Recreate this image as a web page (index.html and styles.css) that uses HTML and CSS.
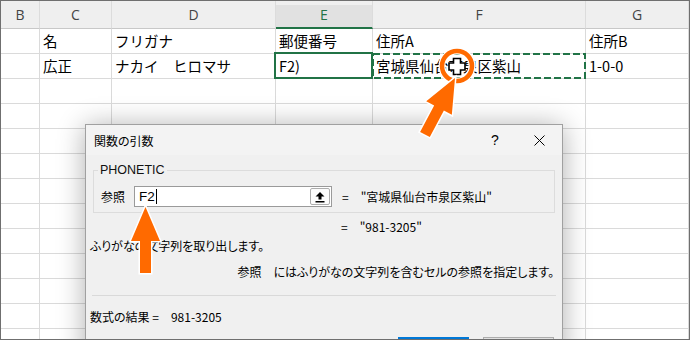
FILE: index.html
```html
<!DOCTYPE html>
<html lang="ja">
  <head>
    <meta charset="UTF-8" />
    <title>関数の引数</title>
    <link rel="stylesheet" href="styles.css">
  </head>
  <body>
    <div class="frame">
      <div class="sheet">
        <!-- 列見出し -->
        <div class="hdr">B</div>
        <div class="hdr">C</div>
        <div class="hdr">D</div>
        <div class="hdr sel">E</div>
        <div class="hdr">F</div>
        <div class="hdr">G</div>

        <!-- 1行目 -->
        <div class="cell"></div>
        <div class="cell">名</div>
        <div class="cell">フリガナ</div>
        <div class="cell">郵便番号</div>
        <div class="cell">住所A</div>
        <div class="cell">住所B</div>

        <!-- 2行目 -->
        <div class="cell"></div>
        <div class="cell">広正</div>
        <div class="cell">ナカイ　ヒロマサ</div>
        <div class="cell active">F2)</div>
        <div class="cell copied">宮城県仙台市泉区紫山
          <svg class="ants" width="215" height="27" viewBox="0 0 215 27">
            <rect x="1" y="1" width="212" height="24" fill="none" stroke="#217346" stroke-width="2" stroke-dasharray="7 3" />
          </svg>
        </div>
        <div class="cell">1-0-0</div>

        <!-- 空の行 -->
        <div class="rest">
          <div class="col"></div>
          <div class="col"></div>
          <div class="col"></div>
          <div class="col"></div>
          <div class="col"></div>
          <div class="col"></div>
        </div>
      </div>

      <!-- 関数の引数ダイアログ -->
      <div class="dialog">
        <div class="dlg-title">
          <span>関数の引数</span>
          <div class="dlg-ctl">
            <span class="ctl">?</span>
            <span class="ctl close">
              <svg width="11" height="11" viewBox="0 0 11 11"><path d="M0.5 0.5 L10.5 10.5 M10.5 0.5 L0.5 10.5" stroke="#000" stroke-width="1" /></svg>
            </span>
          </div>
        </div>

        <fieldset class="group">
          <legend>PHONETIC</legend>
          <div class="arg-row">
            <span class="arg-label">参照</span>
            <div class="arg-input">
              <span class="arg-text">F2</span><span class="caret"></span>
              <span class="ref-btn">
                <svg width="10" height="12" viewBox="0 0 10 12">
                  <path d="M5 1 L9.5 5.5 H6.5 V8.5 H3.5 V5.5 H0.5 Z" fill="#000" />
                  <rect x="0.5" y="10" width="9" height="1.5" fill="#000" />
                </svg>
              </span>
            </div>
            <span class="eq">=</span>
            <span class="val">"宮城県仙台市泉区紫山"</span>
          </div>
        </fieldset>

        <div class="result-line"><span class="eq">=</span><span class="val">"981-3205"</span></div>
        <p class="desc">ふりがなの文字列を取り出します。</p>
        <p class="arg-desc">参照　にはふりがなの文字列を含むセルの参照を指定します。</p>
        <hr class="sep" />
        <p class="formula">数式の結果 =　981-3205</p>

        <div class="buttons">
          <span class="btn primary"></span>
          <span class="btn"></span>
        </div>
      </div>

      <!-- 注目用の矢印と丸 -->
      <svg class="marks" width="690" height="340" viewBox="0 0 690 340">
        <circle cx="457" cy="66" r="15" fill="none" stroke="#fff" stroke-width="7" />
        <circle cx="457" cy="66" r="15" fill="none" stroke="#ff6a00" stroke-width="4.5" />
        <path d="M453.5 58.5 h7 v4.5 h4.5 v7 h-4.5 v4.5 h-7 v-4.5 h-4.5 v-7 h4.5 z" fill="#fff" stroke="#000" stroke-width="1.6" />
        <g transform="translate(455 78) rotate(28)">
          <path d="M0 0 L14.5 34 L5.5 34 L5.5 64 L-5.5 64 L-5.5 34 L-14.5 34 Z" fill="#ff6a00" stroke="#fff" stroke-width="3" stroke-linejoin="miter" paint-order="stroke" />
        </g>
        <g transform="translate(145.5 207)">
          <path d="M0 0 L14.5 34 L5.5 34 L5.5 66 L-5.5 66 L-5.5 34 L-14.5 34 Z" fill="#ff6a00" stroke="#fff" stroke-width="3" stroke-linejoin="miter" paint-order="stroke" />
        </g>
      </svg>
    </div>
  </body>
</html>
```

FILE: styles.css
```css
/* ページ全体 */
body {
  margin: 0;
  font-family: "Noto Sans CJK JP", "Noto Sans", sans-serif;
  color: #000;
}

.frame {
  position: relative;
  width: 690px;
  height: 340px;
  box-sizing: border-box;
  border: 1px solid #6f6f6f;
  overflow: hidden;
  background: #fff;
}

/* ワークシート */
.sheet {
  display: grid;
  grid-template-columns: 39px 72px 164px 97px 213px 103px;
  grid-template-rows: 28px 25px 25px 1fr;
  height: 100%;
}

.hdr {
  box-sizing: border-box;
  background: #efefef;
  border-right: 1px solid #dcdcdc;
  border-bottom: 1px solid #c8c8c8;
  color: #444;
  font-family: "Open Sans", "Noto Sans", sans-serif;
  font-size: 14px;
  line-height: 27px;
  text-align: center;
}

.hdr.sel {
  background: linear-gradient(#efefef 0 4px, #e1e1e1 4px);
  border-bottom: 2px solid #217346;
  color: #217346;
}

.cell {
  position: relative;
  box-sizing: border-box;
  border-right: 1px solid #dadada;
  border-bottom: 1px solid #dadada;
  padding-left: 3px;
  font-size: 14.5px;
  line-height: 24px;
  white-space: nowrap;
}

/* アクティブセル */
.cell.active::after {
  content: "";
  position: absolute;
  top: -2px;
  left: -2px;
  right: -1px;
  bottom: -1px;
  border: 2px solid #217346;
}

/* コピー範囲の点線 */
.ants {
  position: absolute;
  left: -1px;
  top: -1px;
}

.rest {
  grid-column: 1 / -1;
  display: grid;
  grid-template-columns: 39px 72px 164px 97px 213px 103px;
}

.rest .col {
  border-right: 1px solid #dadada;
  background: repeating-linear-gradient(to bottom, transparent 0 24px, #dadada 24px 25px);
}

/* ダイアログ */
.dialog {
  position: absolute;
  left: 84px;
  top: 123px;
  width: 478px;
  height: 240px;
  box-sizing: border-box;
  border: 1px solid #a0a0a0;
  background: #f0f0f0;
  box-shadow: 0 2px 26px rgba(0, 0, 0, 0.32);
  font-size: 12px;
  font-feature-settings: "palt";
}

.dlg-title {
  display: flex;
  align-items: center;
  height: 30px;
  padding-left: 8px;
  background: #f3f3f3;
}

.dlg-ctl {
  display: flex;
  margin-left: auto;
  margin-right: 1px;
}

.ctl {
  display: flex;
  align-items: center;
  justify-content: center;
  width: 44px;
  height: 30px;
  font-family: "Liberation Sans", sans-serif;
  font-size: 14px;
}

.group {
  margin: 8px 7px 0;
  padding: 9px 7px 5px;
  border: 1px solid #dcdcdc;
}

.group legend {
  padding: 0 2px;
  margin-left: -3px;
  font-family: "Liberation Sans", sans-serif;
  font-size: 12.5px;
  line-height: 14px;
  color: #111;
}

.arg-row {
  display: flex;
  align-items: center;
  height: 21px;
}

.arg-label {
  width: 33px;
}

.arg-input {
  display: flex;
  align-items: center;
  width: 198px;
  height: 21px;
  box-sizing: border-box;
  border: 1px solid #9a9a9a;
  background: #fff;
  padding-left: 4px;
}

.arg-text {
  font-family: "Liberation Sans", sans-serif;
  font-size: 13.5px;
}

.caret {
  width: 1px;
  height: 15px;
  margin-left: 1px;
  background: #000;
}

.ref-btn {
  display: flex;
  align-items: center;
  justify-content: center;
  margin-left: auto;
  margin-right: 1px;
  width: 20px;
  height: 17px;
  box-sizing: border-box;
  border: 1px solid #adadad;
  border-radius: 2px;
  background: #fdfdfd;
}

.eq {
  margin-left: 10px;
  margin-right: 12px;
}

.val {
  white-space: nowrap;
}

.result-line {
  display: flex;
  padding-left: 245px;
  margin-top: 5px;
  line-height: 18px;
}

.desc {
  margin: 1px 0 0 4px;
  line-height: 18px;
}

.arg-desc {
  margin: 8px 8px 0 0;
  line-height: 18px;
  text-align: right;
}

.sep {
  margin: 14px 6px 0;
  border: none;
  border-top: 1px solid #d9d9d9;
}

.formula {
  margin: 12px 0 0 4px;
  line-height: 18px;
}

.buttons {
  display: flex;
  gap: 14px;
  margin: 11px 0 0 312px;
}

.btn {
  width: 71px;
  height: 23px;
  box-sizing: border-box;
  border: 1px solid #adadad;
  background: #e1e1e1;
}

.btn.primary {
  border: 2px solid #0078d7;
}

/* 注釈レイヤー */
.marks {
  position: absolute;
  left: -1px;
  top: -1px;
  pointer-events: none;
}
```
